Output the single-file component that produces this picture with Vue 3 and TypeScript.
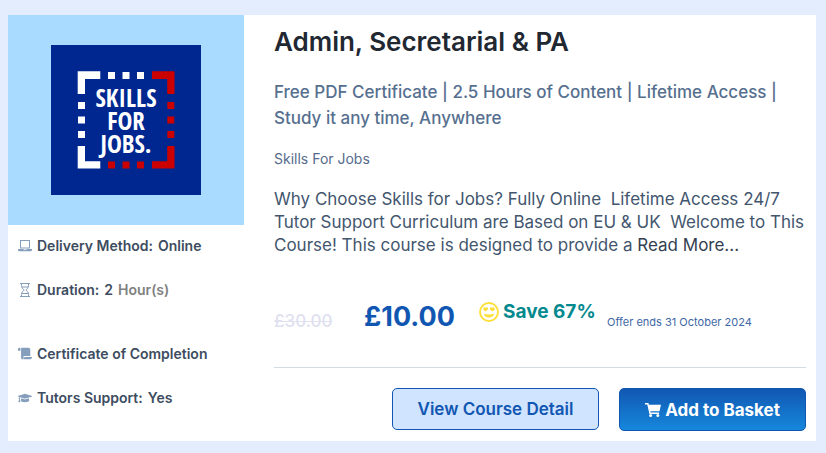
<script setup lang="ts">
interface Fact {
  icon: 'laptop' | 'hourglass' | 'scroll' | 'cap'
  label: string
  value?: string
  unit?: string
}

const factGroups: Fact[][] = [
  [
    { icon: 'laptop', label: 'Delivery Method:', value: 'Online' },
    { icon: 'hourglass', label: 'Duration:', value: '2', unit: 'Hour(s)' },
  ],
  [
    { icon: 'scroll', label: 'Certificate of Completion' },
    { icon: 'cap', label: 'Tutors Support:', value: 'Yes' },
  ],
]
</script>

<template>
  <article class="card">
    <aside class="side">
      <div class="cover">
        <svg class="logo" viewBox="0 0 150 150" role="img" aria-label="Skills for Jobs">
          <rect width="150" height="150" fill="#002790" />
          <g fill="#fff">
            <path d="M26.7 26.3H49.3V34H34V49H26.7Z" />
            <path d="M26.7 123.5H49.3V116.2H34V101H26.7Z" />
            <path d="M57 27h7v7h-7zM71.5 27h7v7h-7zM86 27h7v7h-7z" />
            <path d="M27 57h7v7h-7zM27 71.5h7v7h-7zM27 86h7v7h-7z" />
          </g>
          <g fill="#cb0000">
            <path d="M123.5 26.3H101V34H116.2V49H123.5Z" />
            <path d="M123.5 123.5H101V116.2H116.2V101H123.5Z" />
            <path d="M116.3 57h7v7h-7zM116.3 71.5h7v7h-7zM116.3 86h7v7h-7z" />
            <path d="M57 116.4h7v7h-7zM71.5 116.4h7v7h-7zM86 116.4h7v7h-7z" />
          </g>
          <g class="logo-text" fill="#fff" text-anchor="middle">
            <text x="75" y="62">SKILLS</text>
            <text x="75" y="85">FOR</text>
            <text x="75" y="108">JOBS.</text>
          </g>
        </svg>
      </div>
      <div class="facts">
        <ul v-for="(group, g) in factGroups" :key="g" class="fact-group">
          <li v-for="fact in group" :key="fact.label" class="fact">
            <svg v-if="fact.icon === 'laptop'" class="fact-icon" viewBox="0 0 14 14" aria-hidden="true">
              <rect x="2.500" y="1.500" width="9" height="7.500" fill="none" stroke="currentColor" />
              <path d="M0 10h5.300l.5.800h2.400l.5-.8H14v.7q0 1.600-1.500 1.600h-11Q0 12.300 0 10.700z" fill="currentColor" />
            </svg>
            <svg v-else-if="fact.icon === 'hourglass'" class="fact-icon" viewBox="0 0 14 14" aria-hidden="true">
              <path d="M2 .5h10M2 13.500h10M3.500.5v2C3.500 5 5 6 6.200 7 5 8 3.500 9 3.500 11.500v2M10.500.5v2C10.500 5 9 6 7.800 7c1.200 1 2.700 2 2.700 4.500v2M4 4h6M4 10.500h6" fill="none" stroke="currentColor" />
            </svg>
            <svg v-else-if="fact.icon === 'scroll'" class="fact-icon" viewBox="0 0 14 14" aria-hidden="true">
              <path fill="currentColor" d="M1.300.8C.6.800 0 1.400 0 2.100v1.700h2.500V2.100c0-.7-.5-1.300-1.200-1.300zM3 .8h7.300c1.200 0 2 .8 2 2v6.300H5.600v1.600c0 1.100-.7 1.600-1.300 1.500-.8 0-1.200-.7-1.200-1.500V2.300C3.100 1.700 3.300 1.200 3 .8zM6.300 9.900H14c0 1.500-.9 2.400-2.300 2.400H5c.8-.3 1.300-.9 1.300-1.700z" />
            </svg>
            <svg v-else class="fact-icon" viewBox="0 0 640 512" aria-hidden="true">
              <path fill="currentColor" d="M622.300 153.200 343.400 67.500c-15.200-4.700-31.600-4.700-46.800 0L17.700 153.200c-23.600 7.200-23.600 38.400 0 45.700l48.600 14.900c-10.700 13.200-17.200 29.300-17.900 46.900C38.800 266.200 32 276.100 32 288c0 10.800 5.700 19.900 13.900 25.800L20.300 428.500C18.100 438.500 25.700 448 35.900 448h56.100c10.300 0 17.900-9.500 15.600-19.500L82.100 313.800C90.300 307.900 96 298.800 96 288c0-11.600-6.500-21.200-15.700-26.900.8-15 8.400-28.300 20.700-36.700l195.600 60.100c9.100 2.800 27 7.200 46.800 0l278.900-85.700c23.600-7.200 23.600-38.400 0-45.600zM352.800 315.100c-28.500 8.800-52.800 3.600-65.600 0l-145-44.600L128 384c0 35.300 86 64 192 64s192-28.700 192-64l-14.200-113.500z" />
            </svg>
            <span>{{ fact.label }}</span>
            <span v-if="fact.value">{{ fact.value }}</span>
            <span v-if="fact.unit" class="unit">{{ fact.unit }}</span>
          </li>
        </ul>
      </div>
    </aside>

    <section class="main">
      <h2 class="title">Admin, Secretarial &amp; PA</h2>
      <p class="subtitle">Free PDF Certificate | 2.5 Hours of Content | Lifetime Access |<br />Study it any time, Anywhere</p>
      <p class="provider">Skills For Jobs</p>
      <p class="description">
        Why Choose Skills for Jobs? Fully Online&nbsp; Lifetime Access 24/7<br />
        Tutor Support Curriculum are Based on EU &amp; UK&nbsp; Welcome to This<br />
        Course! This course is designed to provide a <a href="#details" class="more">Read More...</a>
      </p>
      <div class="pricing">
        <s class="old-price">£30.00</s>
        <strong class="price">£10.00</strong>
        <span class="saving">
          <svg class="smile" viewBox="0 0 20 20" aria-hidden="true">
            <circle cx="10" cy="10" r="9" fill="none" stroke="#fddf3a" stroke-width="1.900" />
            <path fill="#fddf3a" d="M4.300 6.200c.3-1 1.500-1.300 2.200-.5.700-.8 2.100-.7 2.500.3.600 1.600-1.300 2.700-2.500 3.400C5.300 8.700 3.800 7.700 4.300 6.200zM11 6c.4-1 1.800-1.100 2.500-.3.700-.8 1.900-.5 2.200.5.500 1.500-1 2.500-2.200 3.200C12.300 8.700 10.400 7.600 11 6zM4.800 11.700c3.300.9 7.100.9 10.400 0-.2 2.100-2.500 3.800-5.200 3.800s-5-1.700-5.200-3.800z" />
          </svg>
          Save 67%
        </span>
        <span class="offer">Offer ends 31 October 2024</span>
      </div>
      <div class="actions">
        <a href="#details" class="btn btn-light">View Course Detail</a>
        <button type="button" class="btn btn-solid">
          <svg class="cart" viewBox="0 0 16 16" aria-hidden="true">
            <path fill="currentColor" d="M0 1h3.400l.5 1.700H16l-1.500 6.500H5.300l.3 1.300h8.500V12H4.400L2.300 2.500H0z" />
            <circle cx="5.600" cy="13.600" r="1.500" fill="currentColor" />
            <circle cx="12.800" cy="13.600" r="1.500" fill="currentColor" />
          </svg>
          Add to Basket
        </button>
      </div>
    </section>
  </article>
</template>

<style>
body {
  background: #e3edfd;
}
</style>

<style scoped>
.card {
  display: flex;
  margin: 15px 10px 12px 8px;
  background: #fff;
  font-family: Inter, "Liberation Sans", sans-serif;
  color: #43566e;
}
.side {
  flex: 0 0 236px;
}
.cover {
  display: flex;
  justify-content: center;
  padding: 30px 0;
  background: #a9daff;
}
.logo {
  width: 150px;
  height: 150px;
}
.logo-text {
  font-family: "Liberation Sans Narrow", "Open Sans Condensed", "DejaVu Sans Condensed", sans-serif;
  font-size: 25px;
  font-weight: 700;
}
.facts {
  display: flex;
  flex-direction: column;
  gap: 44px;
  padding: 11px 10px;
}
.fact-group {
  display: flex;
  flex-direction: column;
  gap: 24px;
  margin: 0;
  padding: 0;
  list-style: none;
}
.fact {
  display: flex;
  align-items: center;
  gap: 5px;
  font-size: 14px;
  line-height: 20px;
  font-weight: 600;
  color: #3d4c60;
}
.fact-icon {
  width: 14px;
  height: 14px;
  color: #859ebb;
}
.unit {
  color: #808080;
}
.main {
  flex: 1;
  min-width: 0;
  padding: 10px 10px 10px 30px;
}
.title {
  margin: 0;
  font-size: 26px;
  line-height: 34px;
  font-weight: 600;
  color: #212832;
}
.subtitle {
  margin: 20px 0 0;
  font-size: 17px;
  line-height: 26px;
  font-weight: 500;
  color: #566f8f;
}
.provider {
  margin: 18px 0 0;
  font-size: 14px;
  line-height: 20px;
  color: #566b8c;
}
.description {
  margin: 19px 0 0;
  font-size: 17px;
  line-height: 23px;
}
.more {
  color: #333f50;
  text-decoration: none;
}
.pricing {
  display: flex;
  align-items: flex-end;
  height: 32px;
  margin-top: 44px;
  white-space: nowrap;
}
.old-price {
  width: 90px;
  font-size: 17px;
  line-height: 24px;
  font-weight: 500;
  color: #dfe1f0;
}
.price {
  width: 115px;
  font-size: 27px;
  line-height: 32px;
  font-weight: 700;
  color: #1157b2;
}
.saving {
  display: flex;
  align-items: center;
  align-self: flex-start;
  gap: 4px;
  width: 128px;
  font-size: 19px;
  line-height: 22px;
  font-weight: 700;
  color: #048a8e;
}
.smile {
  width: 20px;
  height: 20px;
}
.offer {
  font-size: 11px;
  line-height: 22px;
  color: #4167a6;
}
.actions {
  display: flex;
  justify-content: flex-end;
  align-items: flex-start;
  gap: 20px;
  margin-top: 34px;
  padding-top: 20px;
  border-top: 1px solid #d2dce5;
}
.btn {
  display: flex;
  align-items: center;
  justify-content: center;
  gap: 4px;
  box-sizing: border-box;
  padding: 0;
  border: 1px solid #1157b2;
  border-radius: 5px;
  font-family: inherit;
  font-size: 17px;
  line-height: 20px;
  white-space: nowrap;
  text-decoration: none;
}
.btn-light {
  width: 207px;
  height: 42px;
  background: #d0e3ff;
  font-weight: 600;
  color: #1157b2;
}
.btn-solid {
  width: 187px;
  height: 43px;
  background: linear-gradient(#1157b2, #1688dc);
  font-weight: 700;
  color: #fff;
}
.cart {
  width: 16px;
  height: 16px;
}
</style>
